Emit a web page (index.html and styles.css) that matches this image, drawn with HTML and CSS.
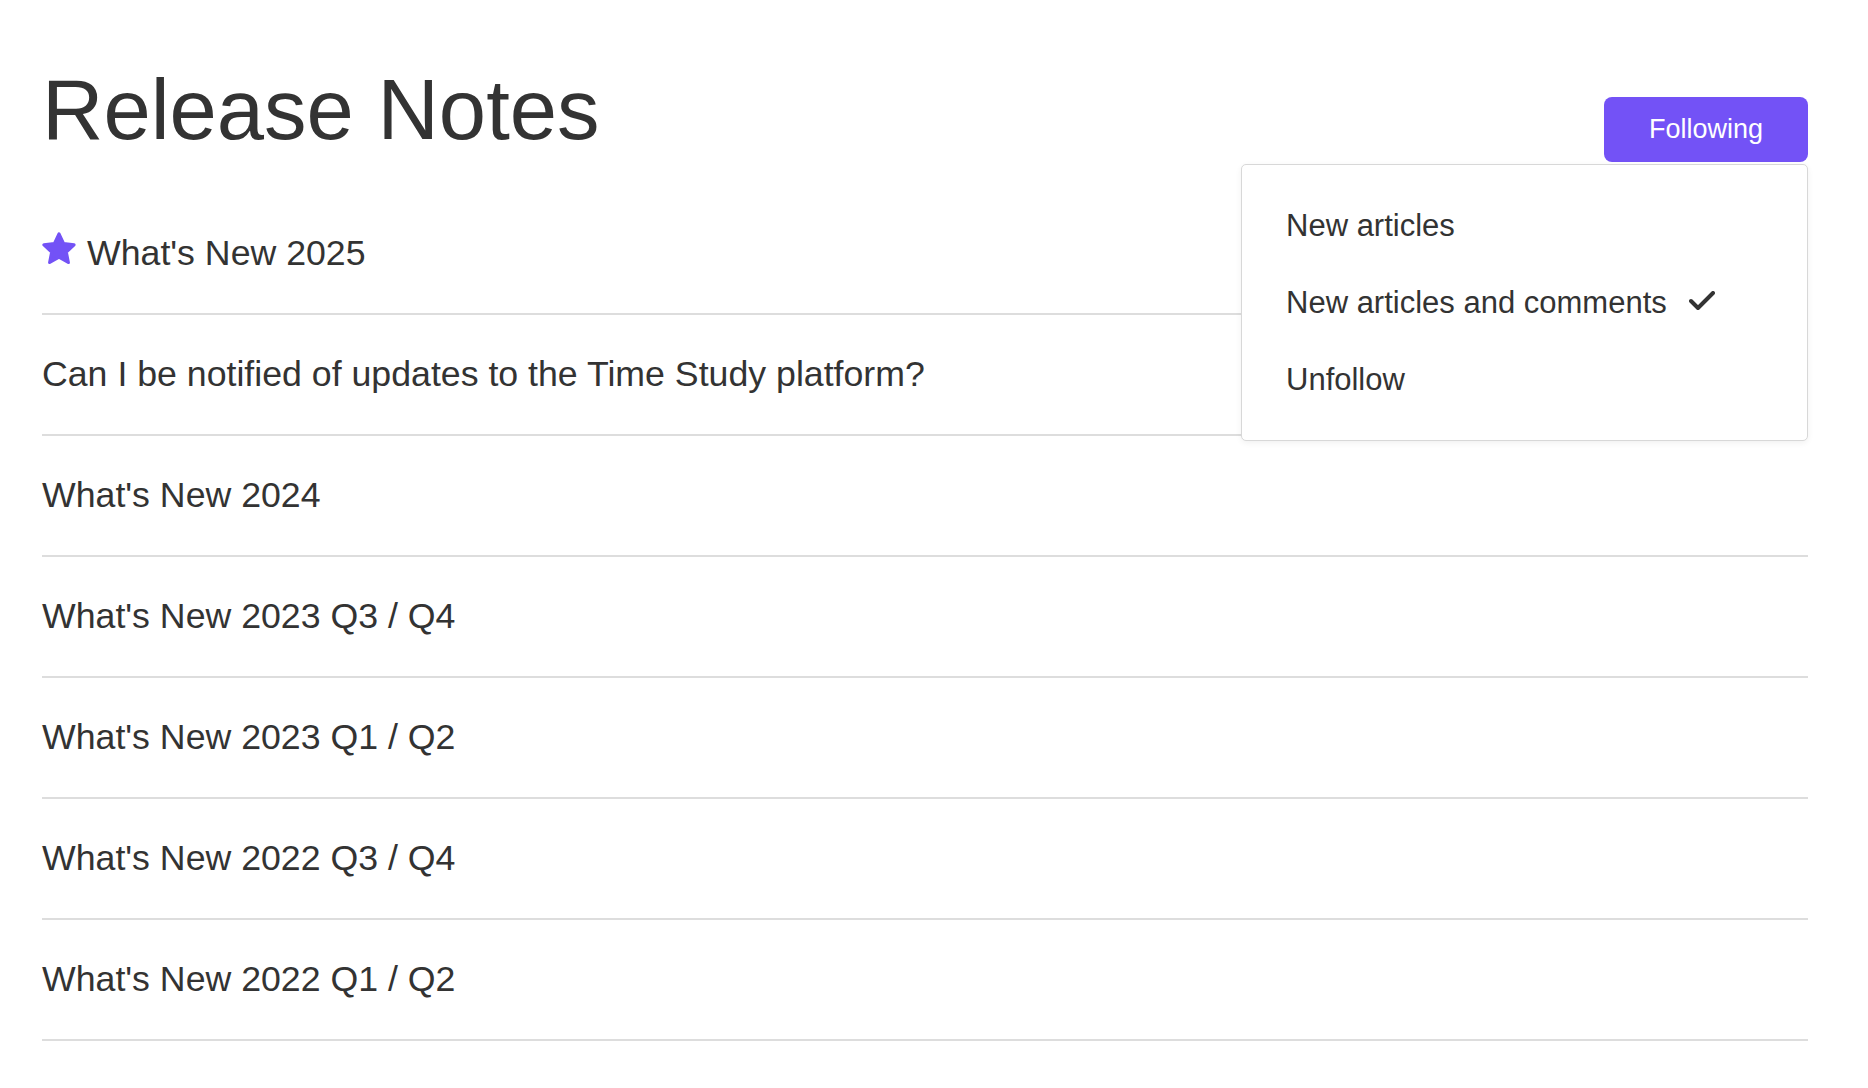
FILE: index.html
```html
<!DOCTYPE html>
<html lang="en">
<head>
    <meta charset="UTF-8">
    <meta name="viewport" content="width=device-width, initial-scale=1.0">
    <title>Release Notes</title>
    <link rel="stylesheet" href="styles.css">
</head>
<body>
    <div class="container">
        <div class="header">
            <h1>Release Notes</h1>
            <div class="follow">
                <button type="button" class="follow-button">Following</button>

                <!-- Dropdown menu -->
                <ul class="dropdown">
                    <li>New articles</li>
                    <li class="selected">New articles and comments
                        <svg class="check" width="26" height="20" viewBox="0 0 26 20">
                            <polyline points="2,10 9,17 24,2" fill="none" stroke="#333" stroke-width="4" stroke-linecap="round" stroke-linejoin="round"/>
                        </svg>
                    </li>
                    <li>Unfollow</li>
                </ul>
            </div>
        </div>

        <ul class="articles">
            <li>
                <svg class="star" width="38" height="38" viewBox="0 0 24 24">
                    <polygon points="12,2.5 14.9,8.6 21.5,9.4 16.6,13.9 17.9,20.5 12,17.2 6.1,20.5 7.4,13.9 2.5,9.4 9.1,8.6" fill="#7352f6" stroke="#7352f6" stroke-width="2" stroke-linejoin="round"/>
                </svg>
                What's New 2025
            </li>
            <li>Can I be notified of updates to the Time Study platform?</li>
            <li>What's New 2024</li>
            <li>What's New 2023 Q3 / Q4</li>
            <li>What's New 2023 Q1 / Q2</li>
            <li>What's New 2022 Q3 / Q4</li>
            <li>What's New 2022 Q1 / Q2</li>
        </ul>
    </div>
</body>
</html>
```

FILE: styles.css
```css
body {
    font-family: "Liberation Sans", Arial, Helvetica, sans-serif;
    margin: 0;
    padding: 0;
    background-color: #ffffff;
    color: #333333;
}

.container {
    width: 1766px;
    margin-left: 42px;
    padding-top: 60px;
}

.header {
    display: flex;
    justify-content: space-between;
    align-items: flex-start;
}

h1 {
    margin: 0;
    font-size: 85px;
    font-weight: normal;
    line-height: 100px;
    color: #333333;
}

.follow {
    position: relative;
    margin-top: 37px;
}

.follow-button {
    background-color: #7352f6;
    color: #ffffff;
    border: none;
    height: 65px;
    padding: 0 45px;
    border-radius: 8px;
    font-family: inherit;
    font-size: 27px;
    cursor: pointer;
}

.dropdown {
    position: absolute;
    top: 67px;
    right: 0;
    width: 565px;
    margin: 0;
    padding: 22px 0;
    list-style: none;
    background-color: #ffffff;
    border: 1px solid #d8d8d8;
    border-radius: 5px;
    box-shadow: 0 2px 6px rgba(0, 0, 0, 0.06);
    z-index: 2;
}

.dropdown li {
    display: flex;
    align-items: center;
    height: 77px;
    line-height: 77px;
    padding-left: 44px;
    font-size: 31px;
    color: #333333;
}

.check {
    margin-left: 22px;
    margin-bottom: 4px;
}

.articles {
    list-style: none;
    margin: 32px 0 0 0;
    padding: 0;
}

.articles li {
    display: flex;
    align-items: center;
    height: 119px;
    border-bottom: 2px solid #dddddd;
    font-size: 35.7px;
    color: #333333;
}

.star {
    margin-left: -2px;
    margin-right: 9px;
    margin-bottom: 10px;
}
```
